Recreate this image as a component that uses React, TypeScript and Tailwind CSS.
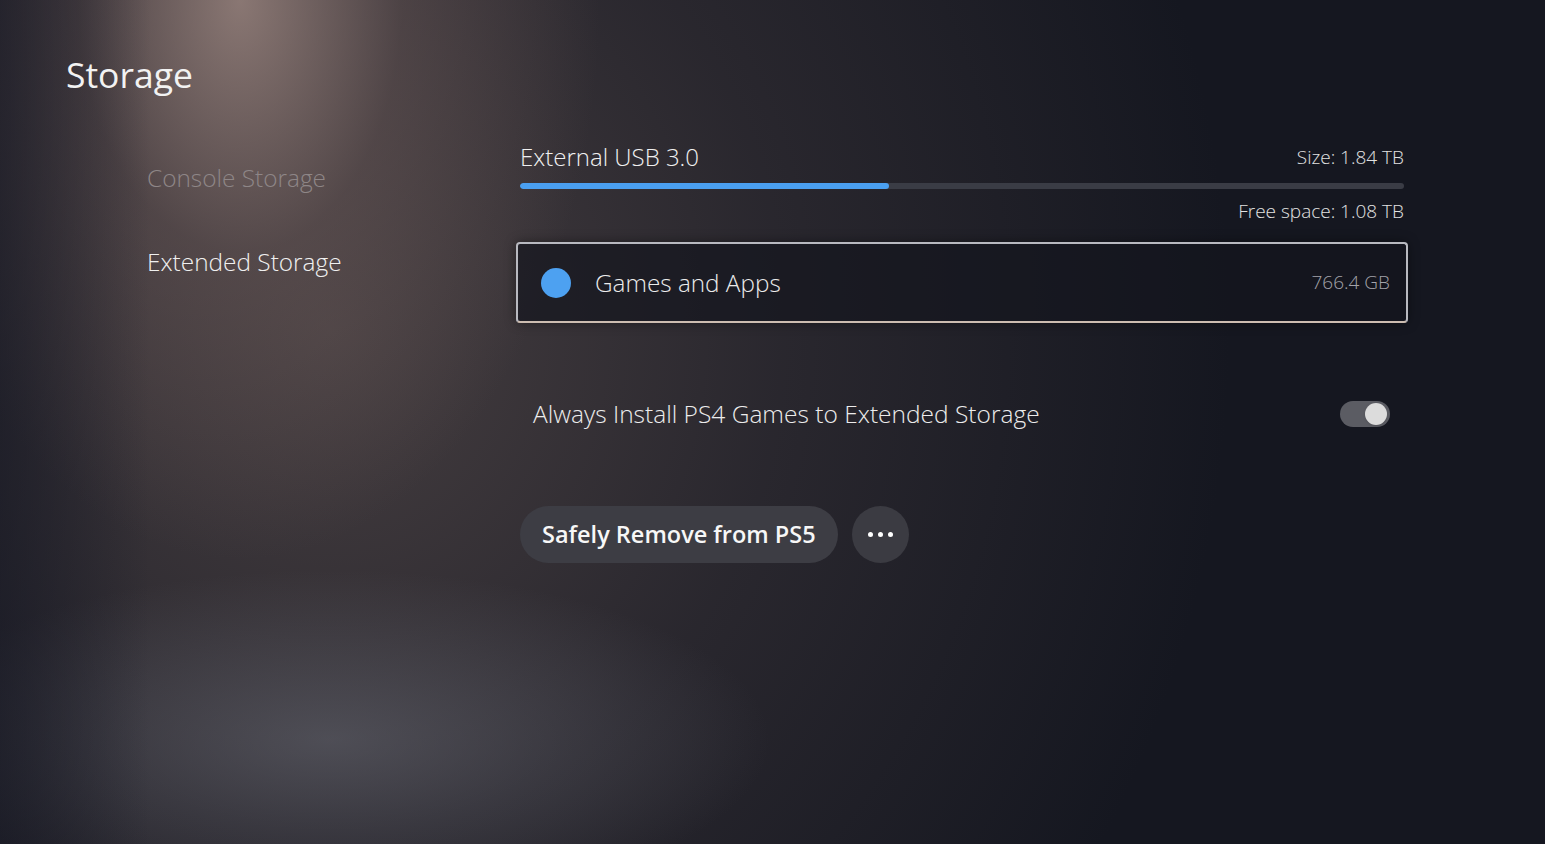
const font = { fontFamily: '"Open Sans", "Noto Sans", sans-serif' };

function Toggle({ on }: { on: boolean }) {
  return (
    <div className="relative h-[26px] w-[50px] rounded-full bg-[#5b5c63]">
      <div
        className={`absolute top-[2px] h-[22px] w-[22px] rounded-full bg-[#dcdcdc] shadow ${on ? "right-[3px]" : "left-[3px]"}`}
      />
    </div>
  );
}

export default function App() {
  return (
    <div
      className="relative h-[844px] w-full overflow-hidden bg-[#151720] text-white font-light"
      style={font}
    >
      {/* background lighting */}
      <div className="pointer-events-none absolute inset-0 bg-[radial-gradient(ellipse_900px_1000px_at_330px_330px,rgba(72,64,66,0.95),rgba(50,46,52,0.7)_50%,transparent_100%)]" />
      <div className="pointer-events-none absolute inset-0 bg-[radial-gradient(ellipse_360px_560px_at_240px_0px,rgba(175,150,142,0.7),rgba(115,96,94,0.4)_45%,transparent_100%)]" />
      <div className="pointer-events-none absolute inset-0 bg-[radial-gradient(ellipse_440px_170px_at_330px_740px,rgba(110,112,122,0.5),transparent_100%)]" />
      <div className="pointer-events-none absolute inset-0 bg-[linear-gradient(90deg,rgba(22,24,36,0.6)_0px,transparent_150px)]" />

      <div className="relative flex h-full">
        {/* left nav */}
        <div className="w-[516px] shrink-0 pl-[66px] pt-[52px]">
          <h1 className="text-[35.5px] leading-[44px] font-normal text-[#f2f2f2]">Storage</h1>
          <nav className="ml-[81px] mt-[66px] flex flex-col gap-[52px] text-[24.4px] leading-[32px]">
            <div className="text-[#8e8687]">Console Storage</div>
            <div className="text-[#f0f0f0]">Extended Storage</div>
          </nav>
        </div>

        {/* right panel */}
        <div className="w-[892px] pt-[141px]">
          <div className="mx-[4px] flex items-center justify-between">
            <span className="text-[24px] leading-[32px] text-[#f0f0f0]">External USB 3.0</span>
            <span className="text-[19px] leading-[26px] text-[#e2e2e2]">Size: 1.84 TB</span>
          </div>
          <div className="mx-[4px] mt-[10px] flex h-[6px] overflow-hidden rounded-full bg-[#3a3c45]">
            <div className="h-full w-[369px] rounded-full bg-[#4a9ff0]" />
          </div>
          <div className="mx-[4px] mt-[9px] text-right text-[19px] leading-[26px] text-[#e2e2e2]">
            Free space: 1.08 TB
          </div>

          <div className="mt-[18px] flex h-[81px] items-center rounded-[4px] border-2 border-[#b8b9c0] border-b-[#cdbdb1] bg-[#14161e]/70 pl-[23px] pr-[16px] shadow-[0_0_12px_rgba(0,0,0,0.4)]">
            <div className="h-[30px] w-[30px] rounded-full bg-[#4da1f1]" />
            <span className="ml-[24px] text-[24.3px] leading-[32px] text-[#ececec]">Games and Apps</span>
            <span className="ml-auto text-[19px] text-[#a3a3aa]">766.4 GB</span>
          </div>

          <div className="mt-[71px] flex h-[40px] items-center justify-between pl-[17px] pr-[18px]">
            <span className="text-[24.5px] leading-[32px] text-[#ececec]">
              Always Install PS4 Games to Extended Storage
            </span>
            <Toggle on />
          </div>

          <div className="ml-[4px] mt-[72px] flex items-center gap-[14px]">
            <button className="h-[57px] rounded-full bg-[#3d3d44] px-[22px] text-[23.5px] font-semibold text-[#f7f7f7]">
              Safely Remove from PS5
            </button>
            <button className="flex h-[57px] w-[57px] items-center justify-center gap-[5px] rounded-full bg-[#3b3b42]">
              <span className="h-[5px] w-[5px] rounded-full bg-white" />
              <span className="h-[5px] w-[5px] rounded-full bg-white" />
              <span className="h-[5px] w-[5px] rounded-full bg-white" />
            </button>
          </div>
        </div>
      </div>
    </div>
  );
}
